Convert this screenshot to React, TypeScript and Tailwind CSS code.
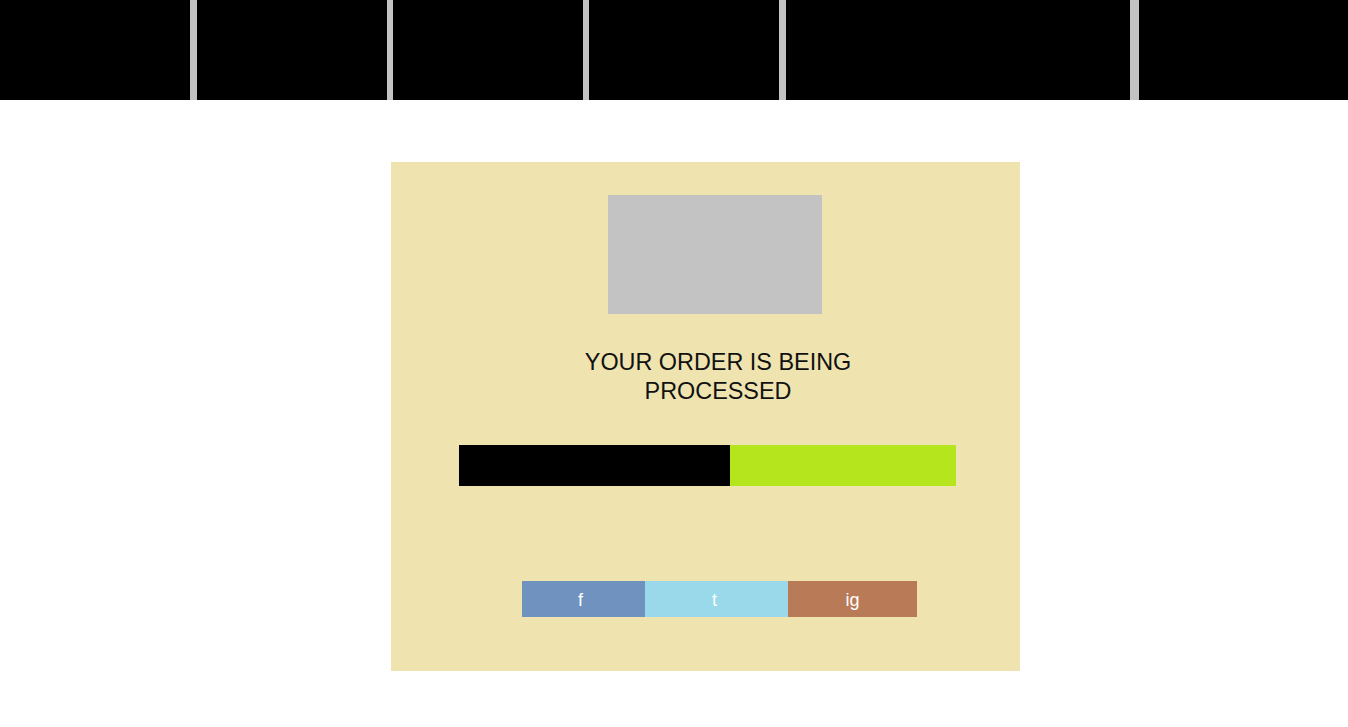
// Order processing page — nav strip, status card with progress bar and social links.

const navWidths = ['w-[190px]', 'w-[190px]', 'w-[190px]', 'w-[190px]', 'w-[344px]', 'flex-1'];
const navGaps = ['w-[7px]', 'w-[6px]', 'w-[6px]', 'w-[7px]', 'w-[9px]'];

export default function App() {
  return (
    <div className="min-h-[727px] bg-white" style={{ fontFamily: '"Liberation Sans", Arial, sans-serif' }}>
      {/* Nav strip */}
      <div className="flex h-[100px]">
        {navWidths.map((w, i) => (
          <div key={i} className="contents">
            <div className={`${w} bg-black`} />
            {i < navGaps.length && <div className={`${navGaps[i]} bg-[#c3c3c3]`} />}
          </div>
        ))}
      </div>

      {/* Status card */}
      <div className="mt-[62px] ml-[391px] w-[629px] bg-[#efe4b0] pt-[33px] pb-[54px]">
        <div className="ml-[217px] w-[214px] h-[119px] bg-[#c3c3c3]" />

        <h1 className="mt-[34px] ml-[177px] w-[300px] text-center text-[23.4px] leading-[29px] font-normal text-[#111]">
          YOUR ORDER IS BEING PROCESSED
        </h1>

        <div className="mt-[39px] ml-[68px] flex h-[41px]">
          <div className="w-[271px] bg-black" />
          <div className="w-[226px] bg-[#b5e61d]" />
        </div>

        <div className="mt-[95px] ml-[131px] flex h-[36px] text-[18px] text-white">
          <a className="w-[123px] flex items-center justify-center pt-[2px] pr-[6px] bg-[#7092be]">f</a>
          <a className="w-[143px] flex items-center justify-center pt-[2px] pr-[4px] bg-[#99d9ea]">t</a>
          <a className="w-[129px] flex items-center justify-center pt-[2px] bg-[#b97a57]">ig</a>
        </div>
      </div>
    </div>
  );
}
